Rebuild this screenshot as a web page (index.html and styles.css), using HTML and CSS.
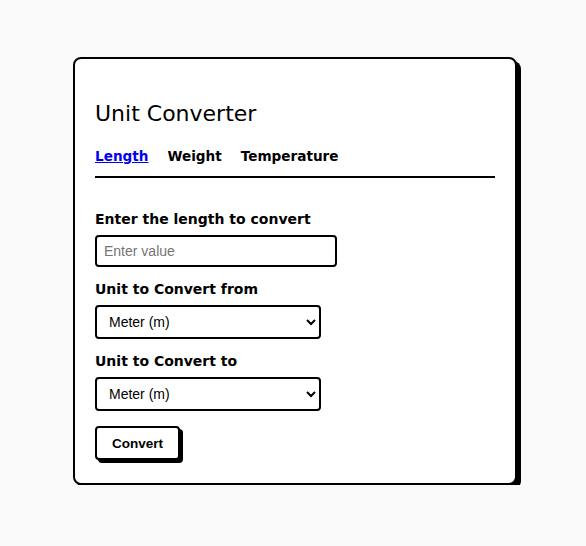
FILE: index.html
```html
<!DOCTYPE html>
<html lang="en">
<head>
<meta charset="utf-8">
<title>Unit Converter</title>
<link rel="stylesheet" href="styles.css">
</head>
<body>
<main class="card">
  <h1 class="title">Unit Converter</h1>
  <nav class="tabs">
    <a class="tab tab-active" href="#">Length</a>
    <a class="tab" href="#">Weight</a>
    <a class="tab" href="#">Temperature</a>
  </nav>
  <form class="form">
    <label class="label" for="value">Enter the length to convert</label>
    <input class="input" id="value" type="text" placeholder="Enter value">
    <label class="label" for="from">Unit to Convert from</label>
    <select class="select" id="from">
      <option>Meter (m)</option>
      <option>Kilometer (km)</option>
      <option>Centimeter (cm)</option>
    </select>
    <label class="label" for="to">Unit to Convert to</label>
    <select class="select" id="to">
      <option>Meter (m)</option>
      <option>Kilometer (km)</option>
      <option>Centimeter (cm)</option>
    </select>
    <button class="button" type="button">Convert</button>
  </form>
</main>
</body>
</html>
```

FILE: styles.css
```css
html, body {
  margin: 0;
  padding: 0;
}
body {
  background: #f9f9f9;
  font-family: "Comic Sans MS", "DejaVu Sans", sans-serif;
  color: #000;
  display: flex;
  justify-content: center;
  padding: 57px 0 0 4px;
}
.card {
  width: 400px;
  height: 384px;
  padding: 20px;
  background: #fff;
  border: 2px solid #000;
  border-radius: 8px;
  box-shadow: 4px 4px 0 #000;
  display: flex;
  flex-direction: column;
}
.title {
  margin: 22px 0 0;
  font-size: 22px;
  line-height: 26px;
  font-weight: 400;
}
.tabs {
  margin-top: 19px;
  display: flex;
  gap: 19px;
  padding-bottom: 10px;
  border-bottom: 2px solid #000;
}
.tab {
  font-size: 13.6px;
  line-height: 20px;
  font-weight: 700;
  color: #000;
  text-decoration: none;
}
.tab-active {
  color: #0000ee;
  text-decoration: underline;
}
.form {
  margin-top: 31px;
  display: flex;
  flex-direction: column;
  align-items: flex-start;
}
.label {
  font-size: 14px;
  line-height: 20px;
  font-weight: 700;
  margin-bottom: 6px;
}
.input {
  box-sizing: border-box;
  width: 242px;
  height: 32px;
  border: 2px solid #000;
  border-radius: 4px;
  padding: 0 7px;
  font-family: "Liberation Sans", Arial, sans-serif;
  font-size: 14px;
  margin-bottom: 12px;
}
.input::placeholder {
  color: #757575;
}
.select {
  box-sizing: border-box;
  width: 226px;
  height: 34px;
  border: 2px solid #000;
  border-radius: 4px;
  padding: 0 8px;
  background: #fff;
  color: #000;
  font-family: "Liberation Sans", Arial, sans-serif;
  font-size: 14px;
  margin-bottom: 12px;
}
.button {
  margin-top: 3px;
  box-sizing: border-box;
  height: 34px;
  padding: 0 15px;
  background: #fff;
  border: 2px solid #000;
  border-radius: 4px;
  box-shadow: 3px 3px 0 #000;
  font-family: "Liberation Sans", Arial, sans-serif;
  font-size: 13.5px;
  font-weight: 700;
  color: #000;
}
```
